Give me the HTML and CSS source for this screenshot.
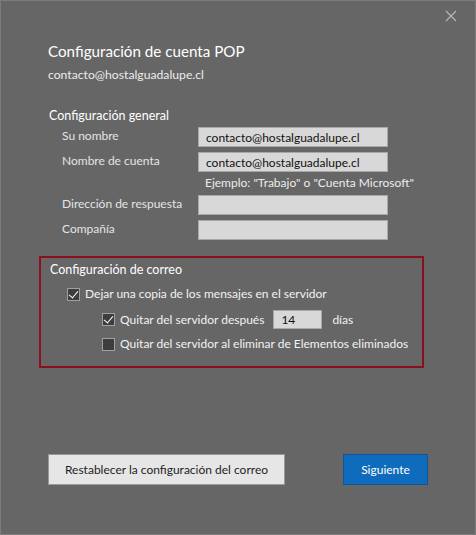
FILE: index.html
```html
<!DOCTYPE html>
<html lang="es">
<head>
    <meta charset="UTF-8">
    <meta name="viewport" content="width=device-width, initial-scale=1.0">
    <title>Configuración de cuenta POP</title>
    <link rel="stylesheet" href="styles.css">
</head>
<body>
    <div class="dialog">
        <div class="topbar">
            <button class="close" aria-label="Cerrar">
                <svg width="12" height="12" viewBox="0 0 12 12">
                    <path d="M1 1 L11 11 M11 1 L1 11" stroke="#b4b4b4" stroke-width="1.3" fill="none"/>
                </svg>
            </button>
        </div>

        <div class="header">
            <h1>Configuración de cuenta POP</h1>
            <p class="account">contacto@hostalguadalupe.cl</p>
        </div>

        <!-- General settings -->
        <section class="general">
            <h2>Configuración general</h2>
            <div class="form-grid">
                <label>Su nombre</label>
                <input type="text" value="contacto@hostalguadalupe.cl">

                <label>Nombre de cuenta</label>
                <input type="text" value="contacto@hostalguadalupe.cl">

                <span></span>
                <span class="hint">Ejemplo: "Trabajo" o "Cuenta Microsoft"</span>

                <label>Dirección de respuesta</label>
                <input type="text" value="">

                <label>Compañía</label>
                <input type="text" value="">
            </div>
        </section>

        <!-- Mail settings -->
        <section class="mail">
            <h2>Configuración de correo</h2>
            <div class="check-row level-1">
                <span class="box checked"></span>
                <span>Dejar una copia de los mensajes en el servidor</span>
            </div>
            <div class="check-row level-2 days-row">
                <span class="box checked"></span>
                <span>Quitar del servidor después</span>
                <input type="text" class="days" value="14">
                <span class="days-label">días</span>
            </div>
            <div class="check-row level-2">
                <span class="box"></span>
                <span>Quitar del servidor al eliminar de Elementos eliminados</span>
            </div>
        </section>

        <div class="actions">
            <button class="btn secondary">Restablecer la configuración del correo</button>
            <button class="btn primary">Siguiente</button>
        </div>
    </div>
</body>
</html>
```

FILE: styles.css
```css
/* Reset */
* {
    margin: 0;
    padding: 0;
    box-sizing: border-box;
}

body {
    font-family: Lato, "Noto Sans", sans-serif;
    background: #666666;
    color: #f2f2f2;
}

/* Dialog frame */
.dialog {
    width: 476px;
    height: 535px;
    background: #666666;
    border: 1px solid #7c7c7c;
    display: flex;
    flex-direction: column;
    white-space: nowrap;
}

.topbar {
    height: 31px;
    display: flex;
    justify-content: flex-end;
    align-items: flex-start;
    padding: 7px 16px 0 0;
}

.close {
    background: none;
    border: none;
    width: 16px;
    height: 16px;
    display: flex;
    align-items: center;
    justify-content: center;
}

/* Header */
.header {
    padding-left: 47px;
    margin-top: 8px;
}

.header h1 {
    font-size: 15.2px;
    font-weight: 400;
    line-height: 22px;
    color: #ffffff;
}

.account {
    font-size: 12.2px;
    line-height: 16px;
    margin-top: 5px;
    color: #ececec;
}

/* General settings */
.general {
    padding-left: 48px;
    margin-top: 25px;
}

h2 {
    font-size: 12.5px;
    font-weight: 400;
    line-height: 16px;
    color: #ffffff;
}

.form-grid {
    display: grid;
    grid-template-columns: 136px 190px;
    row-gap: 5px;
    margin-top: 3px;
    margin-left: 13px;
    align-items: center;
}

.form-grid label {
    font-size: 12px;
    line-height: 16px;
    padding-top: 1px;
    color: #e4e4e4;
    align-self: start;
}

.form-grid input {
    height: 20px;
    width: 190px;
    background: #d8d8d8;
    border: 1px solid #a8a8a8;
    font-family: inherit;
    font-size: 12px;
    color: #111;
    padding: 0 7px;
    outline: none;
}

.hint {
    font-size: 12px;
    line-height: 16px;
    color: #ececec;
    padding-left: 7px;
    margin-top: -2px;
    margin-bottom: -1px;
}

/* Mail settings */
.mail {
    margin: 16px 51px 0 38px;
    height: 112px;
    border: 2px solid #8a0f1f;
    padding: 4px 0 0 9px;
}

.check-row {
    display: flex;
    align-items: center;
    font-size: 12px;
    line-height: 16px;
    color: #f2f2f2;
}

.level-1 {
    margin-top: 8px;
    padding-left: 17px;
}

.level-2 {
    padding-left: 52px;
    margin-top: 7px;
}

.days-row {
    margin-top: 8px;
}

.box {
    width: 13px;
    height: 13px;
    border: 1px solid #a0a0a0;
    background: #3d3d3d;
    margin-right: 5px;
    flex-shrink: 0;
    position: relative;
}

.box.checked::after {
    content: "";
    position: absolute;
    left: 3px;
    top: 0px;
    width: 4px;
    height: 8px;
    border: solid #ffffff;
    border-width: 0 1.5px 1.5px 0;
    transform: rotate(40deg);
}

.days {
    width: 49px;
    height: 19px;
    margin-left: 9px;
    background: #d8d8d8;
    border: 1px solid #a8a8a8;
    font-family: inherit;
    font-size: 12px;
    color: #111;
    padding: 0 7px;
    outline: none;
}

.days-label {
    margin-left: 10px;
}

/* Buttons */
.actions {
    display: flex;
    justify-content: space-between;
    margin: 86px 47px 0 47px;
}

.btn {
    height: 31px;
    font-family: inherit;
    font-size: 12px;
    font-weight: 400;
    cursor: pointer;
}

.secondary {
    width: 237px;
    background: #e6e6e6;
    border: 1px solid #9a9a9a;
    color: #1e1e1e;
}

.primary {
    width: 85px;
    background: #0f6cbd;
    border: 1px solid #0b5799;
    color: #ffffff;
}
```
